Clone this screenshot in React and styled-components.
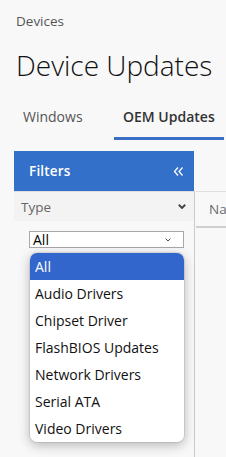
import React from "react";
import styled, { createGlobalStyle } from "styled-components";

const GlobalStyle = createGlobalStyle`
  html, body {
    margin: 0;
    padding: 0;
    background: #f8f8f8;
    font-family: "Open Sans", "Liberation Sans", sans-serif;
    overflow: hidden;
  }
`;

const Page = styled.div`
  width: 226px;
  height: 457px;
  overflow: hidden;
  background: #f8f8f8;
`;

const Header = styled.div`
  padding: 12px 0 0 16px;
`;

const Breadcrumb = styled.div`
  font-size: 13.5px;
  line-height: 18px;
  color: #555;
`;

const Title = styled.h1`
  margin: 16px 0 0;
  font-size: 28px;
  line-height: 38px;
  font-weight: 300;
  color: #111;
  white-space: nowrap;
`;

const Tabs = styled.div`
  display: flex;
  margin: 24px 0 0 14px;
`;

const Tab = styled.div`
  min-width: 100px;
  box-sizing: border-box;
  padding: 0 9px 11px;
  font-size: 14px;
  line-height: 18px;
  white-space: nowrap;
  color: ${(p) => (p.$active ? "#333" : "#555")};
  font-weight: ${(p) => (p.$active ? 600 : 400)};
  border-bottom: 3px solid ${(p) => (p.$active ? "#3a6fc6" : "transparent")};
`;

const Content = styled.div`
  display: flex;
  margin: 11px 0 0 14px;
`;

const FilterPanel = styled.div`
  width: 180px;
  flex-shrink: 0;
`;

const PanelHeader = styled.div`
  height: 40px;
  background: #3370c9;
  display: flex;
  align-items: center;
  justify-content: space-between;
  padding: 0 10px 0 15px;
  color: #fff;
  font-size: 13.5px;
  font-weight: 600;
  letter-spacing: 0.2px;
`;

const FilterRow = styled.div`
  height: 29px;
  border-top: 1px solid #dedede;
  background: #f3f3f3;
  display: flex;
  align-items: center;
  justify-content: space-between;
  padding: 0 8px 0 7px;
  font-size: 13.5px;
  color: #666;
`;

const FilterBody = styled.div`
  padding: 10px 10px 0 15px;
  height: 240px;
  border-right: 1px solid #cbcbcb;
  margin-right: -1px;
`;

const SelectWrap = styled.div`
  position: relative;
  width: 155px;
`;

const SelectBox = styled.div`
  height: 15px;
  border: 1px solid #a8a8a8;
  background: #fff;
  display: flex;
  align-items: center;
  justify-content: space-between;
  padding: 0 12px 0 3px;
  font-size: 14px;
  color: #000;
  line-height: 15px;
  overflow: hidden;
`;

const Menu = styled.ul`
  position: absolute;
  top: 22px;
  left: 1px;
  width: 154px;
  margin: 0;
  padding: 0;
  list-style: none;
  background: #fff;
  border-radius: 7px;
  overflow: hidden;
  box-shadow: 0 3px 12px rgba(0, 0, 0, 0.28), 0 0 0 1px rgba(0, 0, 0, 0.08);
`;

const MenuItem = styled.li`
  height: 27px;
  line-height: 27px;
  padding: 0 5px;
  font-size: 14px;
  color: ${(p) => (p.$selected ? "#fff" : "#111")};
  background: ${(p) => (p.$selected ? "#3366cc" : "transparent")};
  white-space: nowrap;
`;

const Grid = styled.div`
  flex: 1;
  margin-top: 40px;
  border-left: 1px solid #cbcbcb;
  min-width: 0;
`;

const GridHeader = styled.div`
  height: 34px;
  border-top: 1px solid #dedede;
  border-bottom: 2px solid #cfcfcf;
  margin-left: 1px;
  display: flex;
  align-items: center;
  padding-left: 13px;
  font-size: 13.5px;
  color: #6b6b6b;
  white-space: nowrap;
  overflow: hidden;
`;

const Collapse = () => (
  <svg width="11" height="11" viewBox="0 0 11 11" fill="none" stroke="#fff" strokeWidth="1.3">
    <path d="M5 1.5 L1.5 5.5 L5 9.5" />
    <path d="M9.5 1.5 L6 5.5 L9.5 9.5" />
  </svg>
);

const Chevron = ({ size = 8, width = 2 }) => (
  <svg width={size} height={size * 0.6} viewBox="0 0 10 6" fill="none" stroke="#444" strokeWidth={width}>
    <path d="M1 1 L5 5 L9 1" />
  </svg>
);

const options = [
  "All",
  "Audio Drivers",
  "Chipset Driver",
  "FlashBIOS Updates",
  "Network Drivers",
  "Serial ATA",
  "Video Drivers",
];

export default function App() {
  return (
    <Page>
      <GlobalStyle />
      <Header>
        <Breadcrumb>Devices</Breadcrumb>
        <Title>Device Updates</Title>
      </Header>
      <Tabs>
        <Tab>Windows</Tab>
        <Tab $active>OEM Updates</Tab>
      </Tabs>
      <Content>
        <FilterPanel>
          <PanelHeader>
            <span>Filters</span>
            <Collapse />
          </PanelHeader>
          <FilterRow>
            <span>Type</span>
            <Chevron size={8} width={2.4} />
          </FilterRow>
          <FilterBody>
            <SelectWrap>
              <SelectBox>
                <span>All</span>
                <Chevron size={6} width={1.6} />
              </SelectBox>
              <Menu>
                {options.map((o, i) => (
                  <MenuItem key={o} $selected={i === 0}>
                    {o}
                  </MenuItem>
                ))}
              </Menu>
            </SelectWrap>
          </FilterBody>
        </FilterPanel>
        <Grid>
          <GridHeader>Name</GridHeader>
        </Grid>
      </Content>
    </Page>
  );
}
